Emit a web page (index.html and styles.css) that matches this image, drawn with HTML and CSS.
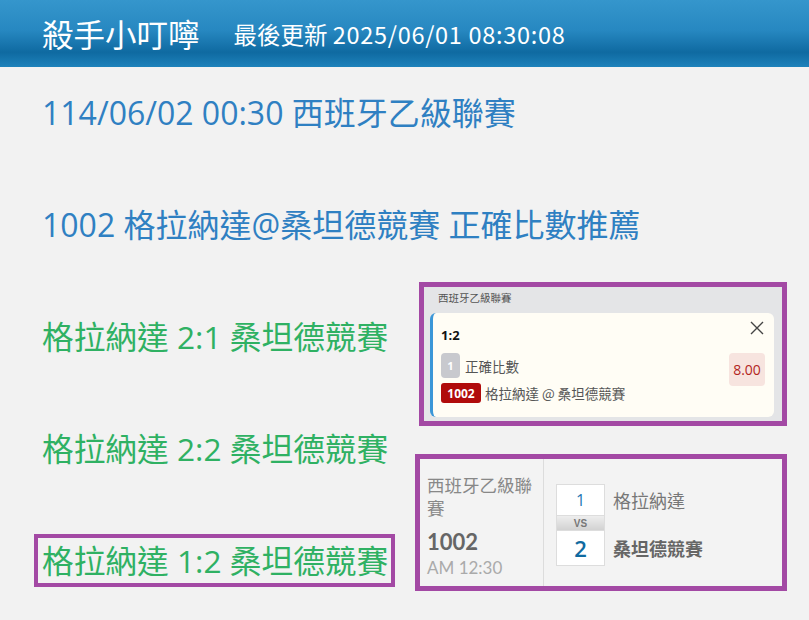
FILE: index.html
```html
<!DOCTYPE html>
<html lang="zh-Hant">
<head>
<meta charset="utf-8">
<title>殺手小叮嚀</title>
<link rel="stylesheet" href="styles.css">
</head>
<body>
<header class="topbar">
  <h1 class="brand">殺手小叮嚀</h1>
  <span class="updated">最後更新 <span class="stamp">2025/06/01 08:30:08</span></span>
</header>
<main class="content">
  <div class="line blue">114/06/02 00:30 西班牙乙級聯賽</div>
  <div class="line blue">1002 格拉納達@桑坦德競賽 正確比數推薦</div>
  <div class="row">
    <div class="picks">
      <div class="line green">格拉納達 2:1 桑坦德競賽</div>
      <div class="line green">格拉納達 2:2 桑坦德競賽</div>
      <div class="line green marked">格拉納達 1:2 桑坦德競賽</div>
    </div>
    <div class="side">
      <section class="slip">
        <div class="slip-league">西班牙乙級聯賽</div>
        <div class="slip-card">
          <div class="slip-top">
            <span class="slip-score">1:2</span>
            <svg class="close" width="14" height="14" viewBox="0 0 14 14"><path d="M1 1L13 13M13 1L1 13" stroke="#444" stroke-width="1.4" fill="none"/></svg>
          </div>
          <div class="slip-mid">
            <div class="slip-market"><span class="badge-num">1</span><span>正確比數</span></div>
            <span class="odds">8.00</span>
          </div>
          <div class="slip-match"><span class="badge-id">1002</span><span>格拉納達 @ 桑坦德競賽</span></div>
        </div>
      </section>
      <section class="match">
        <div class="match-info">
          <div class="league">西班牙乙級聯賽</div>
          <div class="code">1002</div>
          <div class="time">AM 12:30</div>
        </div>
        <div class="match-teams">
          <div class="scores">
            <div class="sbox s1">1</div>
            <div class="vs">VS</div>
            <div class="sbox s2">2</div>
          </div>
          <div class="names">
            <div class="home">格拉納達</div>
            <div class="away">桑坦德競賽</div>
          </div>
        </div>
      </section>
    </div>
  </div>
</main>
</body>
</html>
```
FILE: styles.css
```css
* { box-sizing: border-box; }
html, body { margin: 0; padding: 0; }
body {
  background: #f2f2f2;
  font-family: "Open Sans", "Noto Sans CJK TC", sans-serif;
  width: 809px;
  height: 620px;
  overflow: hidden;
}
.topbar {
  height: 67px;
  display: flex;
  align-items: center;
  padding-left: 42px;
  background: linear-gradient(180deg, #3596cc 0%, #2788c1 45%, #0f6aa1 78%, #1e82bb 100%);
  color: #fff;
}
.brand {
  margin: 0;
  font-family: "Noto Sans CJK TC", sans-serif;
  font-weight: 400;
  font-size: 31.5px;
  line-height: 1;
}
.updated {
  margin-left: 34px;
  font-family: "Noto Sans CJK TC", sans-serif;
  font-size: 23.5px;
  line-height: 1;
  margin-top: 2px;
}
.stamp { letter-spacing: 0.7px; }
.content { padding: 23px 0 0 38px; }
.line {
  display: inline-block;
  font-family: "Open Sans", "Noto Sans CJK TC", sans-serif;
  font-size: 32px;
  line-height: 45px;
  height: 45px;
  padding: 0 3px 0 4px;
  white-space: nowrap;
}
.content > .line { display: block; width: max-content; margin-bottom: 67px; }
.content > .line:nth-child(2) { margin-bottom: 0; }
.blue { color: #2f80c2; }
.green { color: #2fb163; }
.green.line { font-size: 31.7px; }
.row { display: flex; }
.picks { display: flex; flex-direction: column; align-items: flex-start; }
.picks .line { margin-top: 67px; }
.marked { outline: 4px solid #a349a4; }
.side { margin-left: auto; margin-right: 22px; display: flex; flex-direction: column; }
.slip {
  margin-top: 35px;
  margin-left: 4px;
  width: 368px;
  height: 144px;
  border: 5px solid #a349a4;
  background: #e4e5e7;
  padding: 0 8px 4px 6px;
  display: flex;
  flex-direction: column;
}
.slip-league {
  font-family: "Noto Sans CJK TC", sans-serif;
  font-size: 10.5px;
  color: #555;
  height: 26px;
  line-height: 22px;
  padding-left: 8px;
}
.slip-card {
  flex: 1;
  background: #fffdf5;
  border-left: 3px solid #3b97d8;
  border-radius: 6px;
  padding: 8px 9px 0 8px;
  font-family: "Noto Sans CJK TC", sans-serif;
}
.slip-top { display: flex; justify-content: space-between; align-items: flex-start; height: 32px; }
.slip-score { font-family: "Open Sans", sans-serif; font-weight: 700; font-size: 13px; line-height: 28px; color: #111; }
.close { margin-top: 0; margin-right: 1px; }
.slip-mid { display: flex; justify-content: space-between; align-items: flex-start; height: 30px; }
.slip-market { display: flex; align-items: center; gap: 5px; font-size: 13.5px; color: #555; }
.badge-num {
  width: 19px; height: 25px; border-radius: 4px; background: #c8c9ce; color: #fff;
  font-family: "Open Sans", sans-serif; font-weight: 700; font-size: 11px;
  display: flex; align-items: center; justify-content: center;
}
.odds {
  width: 36px; height: 33px; border-radius: 4px; background: #f7e4df; color: #b3261e;
  font-family: "Open Sans", sans-serif; font-size: 14px;
  display: flex; align-items: center; justify-content: center;
}
.slip-match { display: flex; align-items: center; gap: 4px; font-size: 13.5px; color: #555; }
.badge-id {
  width: 40px; height: 20px; border-radius: 3px; background: #b00b0b; color: #fff;
  font-family: "Open Sans", sans-serif; font-weight: 700; font-size: 12px;
  display: flex; align-items: center; justify-content: center;
}
.match {
  margin-top: 28px;
  width: 372px;
  height: 137px;
  border: 5px solid #a349a4;
  background: #f3f3f3;
  display: flex;
}
.match-info {
  width: 124px;
  border-right: 1px solid #dcdcdc;
  padding: 14px 6px 0 7px;
}
.league { font-family: "Noto Sans CJK TC", sans-serif; font-size: 17.5px; line-height: 23px; color: #888; }
.code { font-family: "Lato", sans-serif; font-weight: 700; font-size: 22px; line-height: 28px; color: #666; margin-top: 9px; }
.time { font-family: "Lato", sans-serif; font-size: 17px; line-height: 22px; color: #aaa; margin-top: 1px; }
.match-teams { display: flex; padding: 25px 0 0 12px; }
.scores { width: 49px; display: flex; flex-direction: column; }
.sbox { background: #fff; border: 1px solid #ddd; display: flex; align-items: center; justify-content: center; font-family: "Open Sans", sans-serif; }
.s1 { height: 32px; color: #1f78b4; font-size: 16px; }
.s2 { height: 36px; color: #0f6aa0; font-size: 22px; font-weight: 600; }
.vs {
  height: 14px; background: linear-gradient(#eeeeee, #d2d2d2); border-left: 1px solid #ddd; border-right: 1px solid #ddd;
  font-family: "Liberation Sans", sans-serif; font-weight: 700; font-size: 10px; color: #777;
  display: flex; align-items: center; justify-content: center;
}
.names { padding-left: 8px; font-family: "Noto Sans CJK TC", sans-serif; font-size: 18px; }
.home { height: 32px; line-height: 32px; color: #777; }
.away { margin-top: 14px; height: 36px; line-height: 36px; color: #666; font-weight: 700; }
```
